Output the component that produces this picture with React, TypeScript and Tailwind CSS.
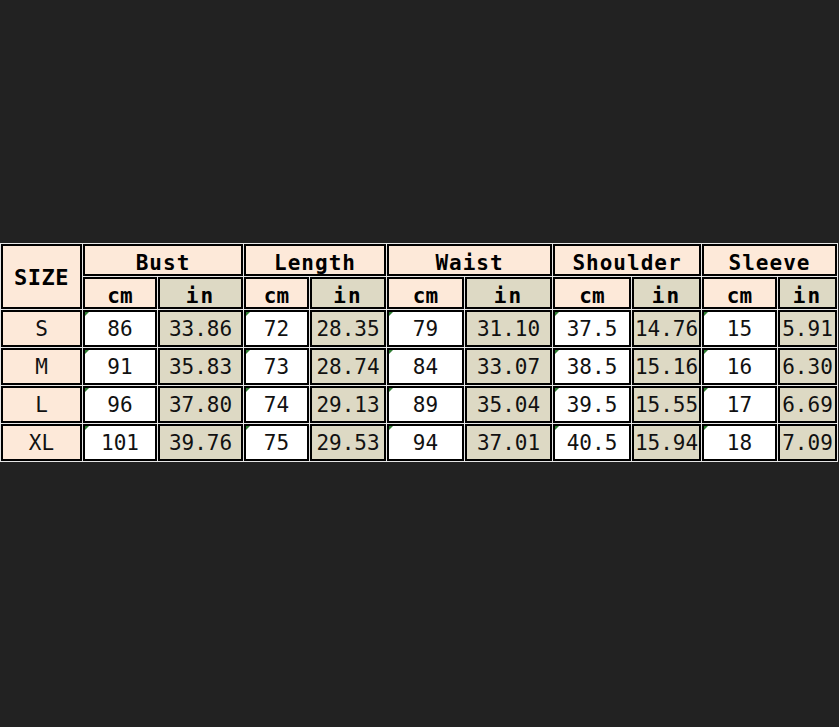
const mono = "font-['DejaVu_Sans_Mono','Liberation_Mono',monospace]"

const groups = ["Bust", "Length", "Waist", "Shoulder", "Sleeve"]

const rows = [
  { size: "S", vals: ["86", "33.86", "72", "28.35", "79", "31.10", "37.5", "14.76", "15", "5.91"] },
  { size: "M", vals: ["91", "35.83", "73", "28.74", "84", "33.07", "38.5", "15.16", "16", "6.30"] },
  { size: "L", vals: ["96", "37.80", "74", "29.13", "89", "35.04", "39.5", "15.55", "17", "6.69"] },
  { size: "XL", vals: ["101", "39.76", "75", "29.53", "94", "37.01", "40.5", "15.94", "18", "7.09"] },
]

const cell = "border-2 border-black flex items-center justify-center"

const Mark = () => (
  <span className="absolute left-0 top-0 h-0 w-0 border-t-[4px] border-r-[4px] border-t-[#2e7d32] border-r-transparent" />
)

export default function App() {
  return (
    <div className="min-h-[727px] w-full bg-[#222222] pt-[243px]">
      <div
        className={`grid w-fit grid-cols-[81px_74px_85px_65px_76px_77px_87px_78px_69px_75px_59px] grid-rows-[32px_32px_37px_37px_37px_37px] gap-px bg-[#e6e6e6] p-px text-black ${mono}`}
      >
        <div className={`${cell} row-span-2 bg-[#fde9d9] pt-[2px] text-[22px] font-bold tracking-[0.5px]`}>SIZE</div>
        {groups.map(g => (
          <div key={g} className={`${cell} col-span-2 bg-[#fde9d9] pt-[7px] text-[21px] font-bold tracking-[1px]`}>
            {g}
          </div>
        ))}
        {groups.map(g => (
          <>
            <div key={g + "cm"} className={`${cell} bg-[#fde9d9] pt-[7px] text-[21px] font-bold`}>cm</div>
            <div key={g + "in"} className={`${cell} bg-[#ddd9c4] pt-[7px] text-[21px] font-bold tracking-[2px]`}>in</div>
          </>
        ))}
        {rows.map(r => (
          <>
            <div key={r.size} className={`${cell} bg-[#fde9d9] pt-[2px] text-[21px] text-[#111]`}>{r.size}</div>
            {r.vals.map((v, i) => (
              <div
                key={r.size + i}
                className={`${cell} relative pt-[2px] text-[21px] text-[#111] ${i % 2 === 0 ? "bg-white" : "bg-[#ddd9c4]"}`}
              >
                {i % 2 === 0 && <Mark />}
                {v}
              </div>
            ))}
          </>
        ))}
      </div>
    </div>
  )
}
